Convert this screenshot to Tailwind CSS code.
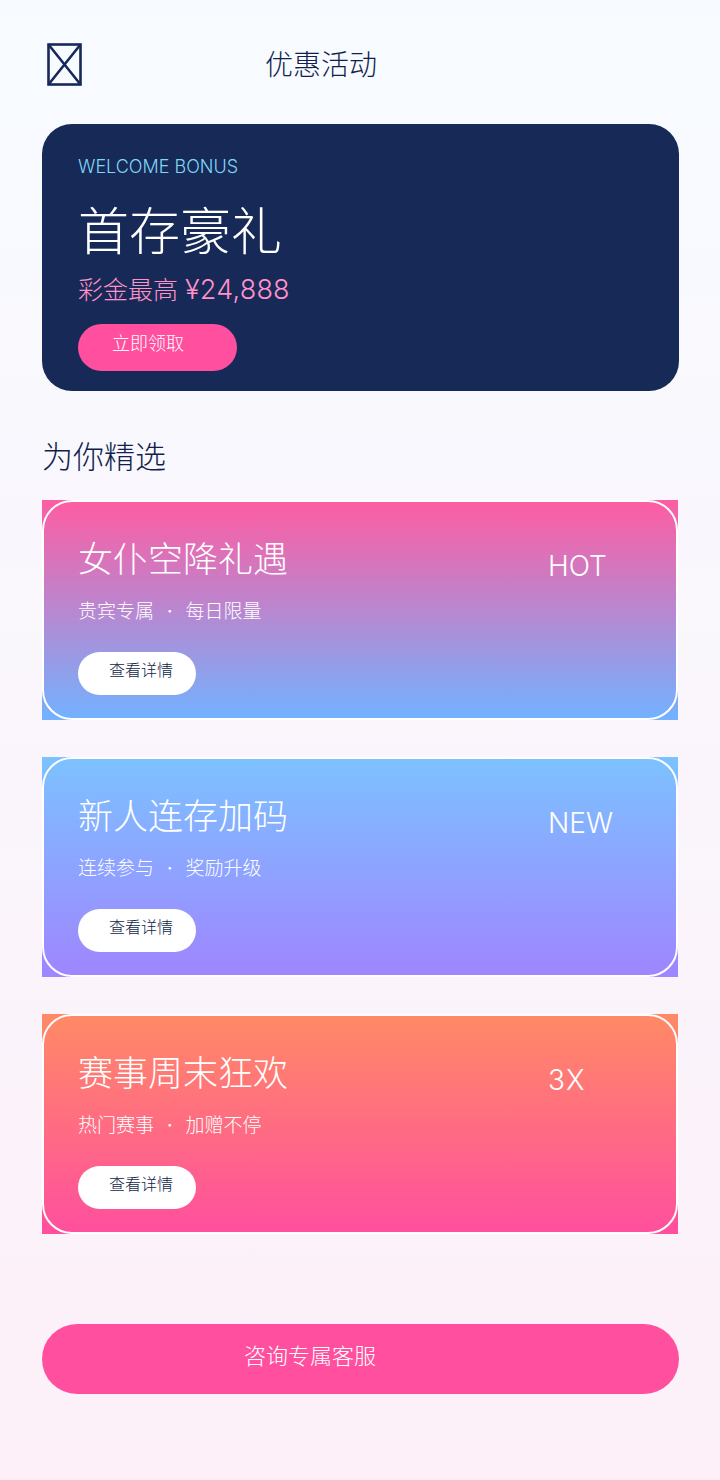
<!DOCTYPE html>
<html lang="zh-CN">
<head>
    <meta charset="UTF-8">
    <meta name="viewport" content="width=device-width, initial-scale=1.0">
    <title>优惠活动</title>
    <script src="https://cdn.jsdelivr.net/npm/@tailwindcss/browser@4"></script>
</head>
<body class="w-[720px] h-[1480px] overflow-hidden bg-linear-to-b/srgb from-[#f7fbff] to-[#fdf0f9] font-['Inter','Noto_Sans_CJK_SC',sans-serif] font-light text-[#121f4c]">
    <header class="h-[124px] pl-[46px] pt-[42px] flex items-start">
        <svg class="w-[37px] h-[45px]" viewBox="0 0 37 45" fill="none" stroke="#17295a" stroke-width="2.6">
            <rect x="2.5" y="2.5" width="32" height="40"></rect>
            <path d="M2.5 2.5L34.5 42.5M34.5 2.5L2.5 42.5"></path>
        </svg>
        <h1 class="ml-[182px] mt-[3px] text-[28px] leading-[40px]">优惠活动</h1>
    </header>

    <section class="mx-[42px] w-[637px] h-[267px] rounded-[30px] bg-[#172957] pl-[36px] pt-[30px] text-white">
        <p class="text-[18px] leading-[26px] text-[#7fd6f5]">WELCOME BONUS</p>
        <h2 class="mt-[16px] text-[51px] leading-[72px]">首存豪礼</h2>
        <p class="mt-[4px] text-[25px] leading-[36px] text-[#ff93c8]">彩金最高 <span class="text-[27px] tracking-[0.2px]">¥24,888</span></p>
        <button class="mt-[16px] w-[159px] h-[47px] rounded-full bg-[#ff4f9e] pl-[34px] pb-[8px] text-left text-[18px] text-white">立即领取</button>
    </section>

    <h2 class="mt-[43px] ml-[42px] text-[31px] leading-[46px]">为你精选</h2>

    <div class="mt-[20px] mx-[42px] w-[636px] flex flex-col gap-[37px]">
        <article class="relative h-[220px] bg-linear-to-b/srgb from-[#ff5ca1] to-[#72b2ff] text-white">
            <div class="absolute inset-0 rounded-[30px] border-2 border-white"></div>
            <h3 class="absolute left-[36px] top-[34px] text-[35px] leading-[50px]">女仆空降礼遇</h3>
            <p class="absolute left-[36px] top-[98px] text-[19px] leading-[28px]">贵宾专属<span class="mx-[13px] font-normal">·</span>每日限量</p>
            <span class="absolute left-[506px] top-[46px] text-[28px] leading-[40px]">HOT</span>
            <button class="absolute left-[36px] top-[152px] w-[118px] h-[43px] rounded-full bg-white pl-[31px] pb-[7px] text-left text-[16px] text-[#0f1d45]">查看详情</button>
        </article>
        <article class="relative h-[220px] bg-linear-to-b/srgb from-[#7cc2ff] to-[#9f85ff] text-white">
            <div class="absolute inset-0 rounded-[30px] border-2 border-white"></div>
            <h3 class="absolute left-[36px] top-[34px] text-[35px] leading-[50px]">新人连存加码</h3>
            <p class="absolute left-[36px] top-[98px] text-[19px] leading-[28px]">连续参与<span class="mx-[13px] font-normal">·</span>奖励升级</p>
            <span class="absolute left-[506px] top-[46px] text-[28px] leading-[40px]">NEW</span>
            <button class="absolute left-[36px] top-[152px] w-[118px] h-[43px] rounded-full bg-white pl-[31px] pb-[7px] text-left text-[16px] text-[#0f1d45]">查看详情</button>
        </article>
        <article class="relative h-[220px] bg-linear-to-b/srgb from-[#ff8a65] to-[#ff4f9e] text-white">
            <div class="absolute inset-0 rounded-[30px] border-2 border-white"></div>
            <h3 class="absolute left-[36px] top-[34px] text-[35px] leading-[50px]">赛事周末狂欢</h3>
            <p class="absolute left-[36px] top-[98px] text-[19px] leading-[28px]">热门赛事<span class="mx-[13px] font-normal">·</span>加赠不停</p>
            <span class="absolute left-[506px] top-[46px] text-[28px] leading-[40px] tracking-[1.5px]">3X</span>
            <button class="absolute left-[36px] top-[152px] w-[118px] h-[43px] rounded-full bg-white pl-[31px] pb-[7px] text-left text-[16px] text-[#0f1d45]">查看详情</button>
        </article>
    </div>

    <button class="mt-[90px] ml-[42px] block w-[637px] h-[70px] rounded-full bg-[#ff4f9e] pl-[202px] pb-[6px] text-left text-[22px] text-white">咨询专属客服</button>
</body>
</html>
